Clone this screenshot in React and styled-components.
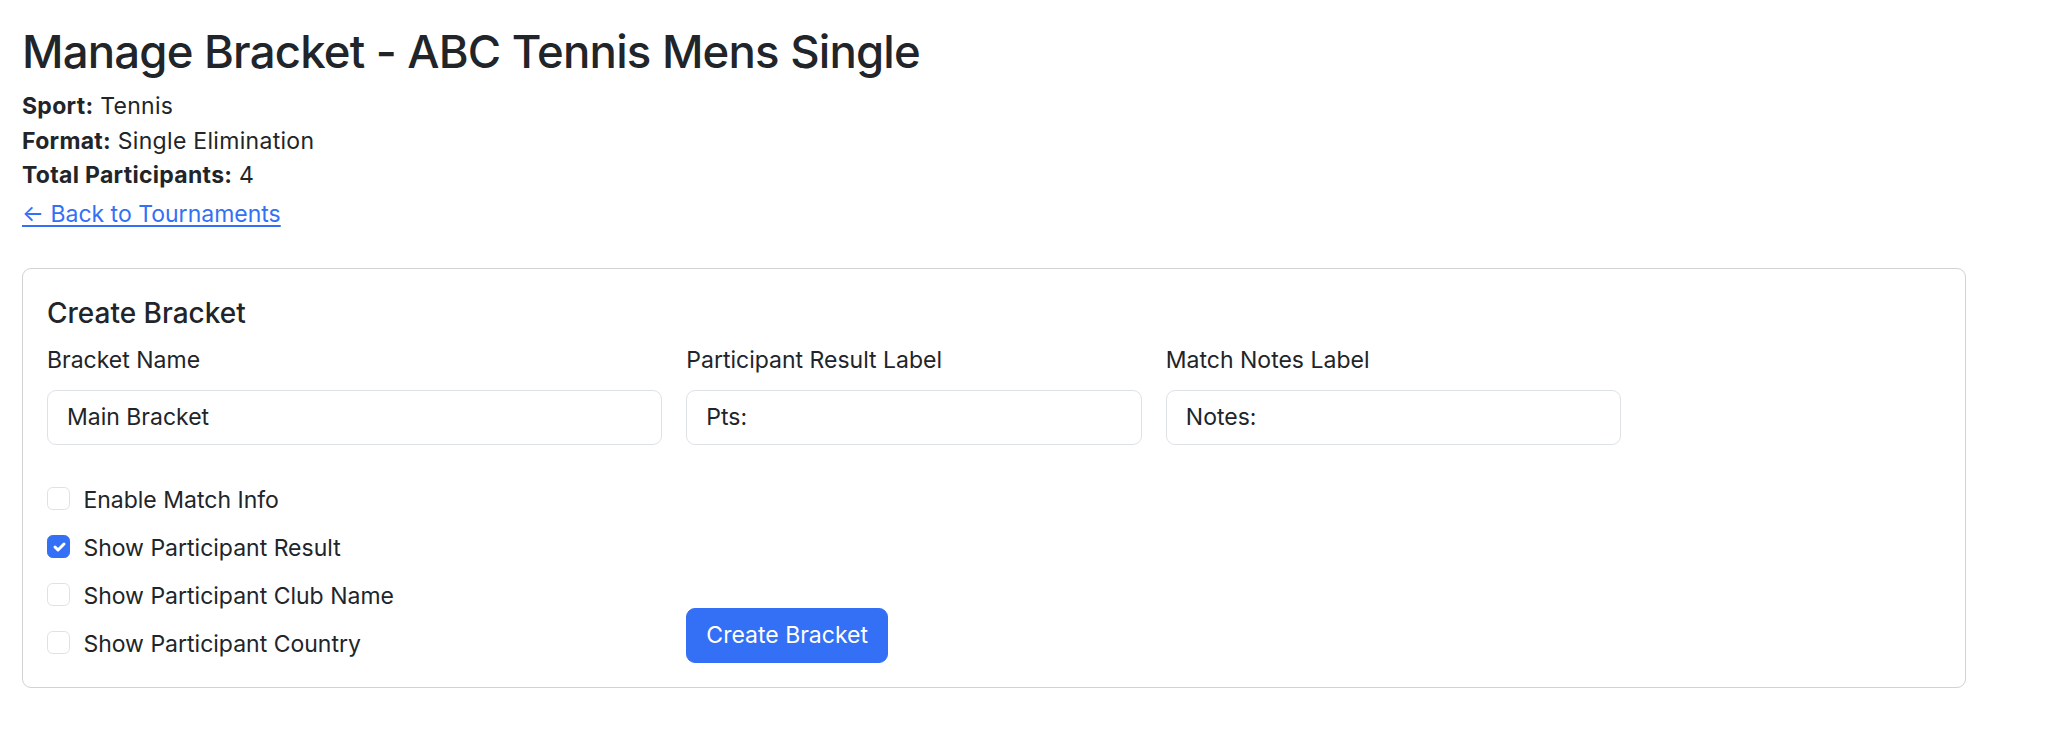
import React from "react";
import styled, { createGlobalStyle } from "styled-components";

const Global = createGlobalStyle`
  html, body { margin: 0; padding: 0; background: #fff; }
  body {
    font-family: Inter, "Noto Sans", "Liberation Sans", sans-serif;
    color: #212529;
    font-size: 23px;
    line-height: 34.5px;
  }
  * { box-sizing: border-box; }
`;

const Page = styled.div`
  padding: 24px 82px 40px 22px;
`;

const Title = styled.h1`
  margin: 0 0 10px 0;
  font-size: 45.5px;
  line-height: 55px;
  font-weight: 500;
  letter-spacing: -0.8px;
`;

const InfoLine = styled.div`
  font-size: 23px;
  line-height: 34.5px;
  letter-spacing: 0.3px;
`;

const Strong = styled.strong`
  font-weight: 700;
`;

const BackLink = styled.a`
  display: inline-block;
  margin-top: 4px;
  color: #3470f5;
  text-decoration: underline;
  text-underline-offset: 3px;
  text-decoration-thickness: 1.5px;
  font-size: 23px;
  line-height: 34.5px;
  cursor: pointer;
`;

const Card = styled.section`
  margin-top: 37px;
  width: 1944px;
  border: 1px solid #d2d2d2;
  border-radius: 9px;
  padding: 24px;
`;

const CardTitle = styled.h5`
  margin: 0 0 10px 0;
  font-size: 28px;
  line-height: 40px;
  font-weight: 500;
`;

const Grid = styled.div`
  display: grid;
  grid-template-columns: repeat(12, 1fr);
  column-gap: 24px;
  margin-top: ${(p) => p.$mt || 0}px;
`;

const Field = styled.div`
  grid-column: span ${(p) => p.$span};
  display: flex;
  flex-direction: column;
`;

const Label = styled.label`
  display: block;
  margin-bottom: 12px;
  font-size: 23px;
  line-height: 34.5px;
`;

const Input = styled.input`
  display: block;
  width: 100%;
  height: 55px;
  padding: 9px 19px;
  font-family: inherit;
  font-size: 23px;
  line-height: 35px;
  color: #212529;
  background: #fff;
  border: 1px solid #dee2e6;
  border-radius: 9px;
  outline: none;
`;

const CheckList = styled.div`
  grid-column: span 4;
  display: flex;
  flex-direction: column;
  gap: 13.5px;
  padding-bottom: 2px;
`;

const CheckRow = styled.label`
  display: flex;
  align-items: flex-start;
  gap: 13px;
  font-size: 23px;
  line-height: 34.5px;
`;

const Box = styled.span`
  flex: 0 0 auto;
  width: 23.4px;
  height: 23.4px;
  margin-top: 4.6px;
  border-radius: 5.75px;
  border: 1px solid ${(p) => (p.$checked ? "#3470f5" : "#dee2e6")};
  background: ${(p) => (p.$checked ? "#3470f5" : "#fff")};
  display: flex;
  align-items: center;
  justify-content: center;
`;

const ButtonCol = styled.div`
  grid-column: span 3;
  display: flex;
  align-items: flex-end;
`;

const PrimaryButton = styled.button`
  height: 55px;
  padding: 9px 19px;
  font-family: inherit;
  font-size: 23px;
  line-height: 35px;
  color: #fff;
  background: #3470f5;
  border: 1px solid #3470f5;
  border-radius: 9px;
  cursor: pointer;
`;

function Checkbox({ checked, label }) {
  return (
    <CheckRow>
      <Box $checked={checked}>
        {checked && (
          <svg width="20" height="20" viewBox="0 0 20 20">
            <path
              d="m6 10 3 3 6-6"
              fill="none"
              stroke="#fff"
              strokeWidth="3"
              strokeLinecap="round"
              strokeLinejoin="round"
            />
          </svg>
        )}
      </Box>
      {label}
    </CheckRow>
  );
}

export default function App() {
  return (
    <>
      <Global />
      <Page>
        <Title>Manage Bracket - ABC Tennis Mens Single</Title>
        <InfoLine>
          <Strong>Sport:</Strong> Tennis
        </InfoLine>
        <InfoLine>
          <Strong>Format:</Strong> Single Elimination
        </InfoLine>
        <InfoLine>
          <Strong>Total Participants:</Strong> 4
        </InfoLine>
        <BackLink>← Back to Tournaments</BackLink>

        <Card>
          <CardTitle>Create Bracket</CardTitle>
          <Grid>
            <Field $span={4}>
              <Label>Bracket Name</Label>
              <Input defaultValue="Main Bracket" />
            </Field>
            <Field $span={3}>
              <Label>Participant Result Label</Label>
              <Input defaultValue="Pts:" />
            </Field>
            <Field $span={3}>
              <Label>Match Notes Label</Label>
              <Input defaultValue="Notes:" />
            </Field>
          </Grid>
          <Grid $mt={38}>
            <CheckList>
              <Checkbox label="Enable Match Info" />
              <Checkbox checked label="Show Participant Result" />
              <Checkbox label="Show Participant Club Name" />
              <Checkbox label="Show Participant Country" />
            </CheckList>
            <ButtonCol>
              <PrimaryButton>Create Bracket</PrimaryButton>
            </ButtonCol>
          </Grid>
        </Card>
      </Page>
    </>
  );
}
